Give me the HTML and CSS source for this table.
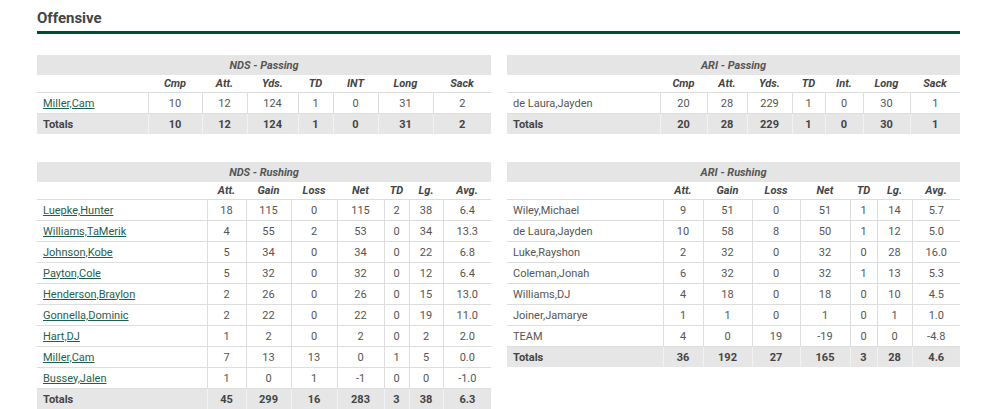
FILE: index.html
```html
<!DOCTYPE html>
<html>
<head>
<meta charset="utf-8">
<link rel="stylesheet" href="styles.css">
</head>
<body>
<div class="page">
  <h2 class="section-title">Offensive</h2>
  <div class="grid">
    <table class="stats pass-nds">
      <colgroup><col><col><col><col><col><col><col><col></colgroup>
      <thead>
        <tr class="caption-row"><th colspan="8">NDS - Passing</th></tr>
        <tr class="head-row"><th></th><th>Cmp</th><th>Att.</th><th>Yds.</th><th>TD</th><th>INT</th><th>Long</th><th>Sack</th></tr>
      </thead>
      <tbody>
        <tr><td><a href="#">Miller,Cam</a></td><td>10</td><td>12</td><td>124</td><td>1</td><td>0</td><td>31</td><td>2</td></tr>
        <tr class="totals"><td>Totals</td><td>10</td><td>12</td><td>124</td><td>1</td><td>0</td><td>31</td><td>2</td></tr>
      </tbody>
    </table>
    <table class="stats pass-ari">
      <colgroup><col><col><col><col><col><col><col><col></colgroup>
      <thead>
        <tr class="caption-row"><th colspan="8">ARI - Passing</th></tr>
        <tr class="head-row"><th></th><th>Cmp</th><th>Att.</th><th>Yds.</th><th>TD</th><th>Int.</th><th>Long</th><th>Sack</th></tr>
      </thead>
      <tbody>
        <tr><td>de Laura,Jayden</td><td>20</td><td>28</td><td>229</td><td>1</td><td>0</td><td>30</td><td>1</td></tr>
        <tr class="totals"><td>Totals</td><td>20</td><td>28</td><td>229</td><td>1</td><td>0</td><td>30</td><td>1</td></tr>
      </tbody>
    </table>
    <table class="stats rush-nds">
      <colgroup><col><col><col><col><col><col><col><col></colgroup>
      <thead>
        <tr class="caption-row"><th colspan="8">NDS - Rushing</th></tr>
        <tr class="head-row"><th></th><th>Att.</th><th>Gain</th><th>Loss</th><th>Net</th><th>TD</th><th>Lg.</th><th>Avg.</th></tr>
      </thead>
      <tbody>
        <tr><td><a href="#">Luepke,Hunter</a></td><td>18</td><td>115</td><td>0</td><td>115</td><td>2</td><td>38</td><td>6.4</td></tr>
        <tr><td><a href="#">Williams,TaMerik</a></td><td>4</td><td>55</td><td>2</td><td>53</td><td>0</td><td>34</td><td>13.3</td></tr>
        <tr><td><a href="#">Johnson,Kobe</a></td><td>5</td><td>34</td><td>0</td><td>34</td><td>0</td><td>22</td><td>6.8</td></tr>
        <tr><td><a href="#">Payton,Cole</a></td><td>5</td><td>32</td><td>0</td><td>32</td><td>0</td><td>12</td><td>6.4</td></tr>
        <tr><td><a href="#">Henderson,Braylon</a></td><td>2</td><td>26</td><td>0</td><td>26</td><td>0</td><td>15</td><td>13.0</td></tr>
        <tr><td><a href="#">Gonnella,Dominic</a></td><td>2</td><td>22</td><td>0</td><td>22</td><td>0</td><td>19</td><td>11.0</td></tr>
        <tr><td><a href="#">Hart,DJ</a></td><td>1</td><td>2</td><td>0</td><td>2</td><td>0</td><td>2</td><td>2.0</td></tr>
        <tr><td><a href="#">Miller,Cam</a></td><td>7</td><td>13</td><td>13</td><td>0</td><td>1</td><td>5</td><td>0.0</td></tr>
        <tr><td><a href="#">Bussey,Jalen</a></td><td>1</td><td>0</td><td>1</td><td>-1</td><td>0</td><td>0</td><td>-1.0</td></tr>
        <tr class="totals"><td>Totals</td><td>45</td><td>299</td><td>16</td><td>283</td><td>3</td><td>38</td><td>6.3</td></tr>
      </tbody>
    </table>
    <table class="stats rush-ari">
      <colgroup><col><col><col><col><col><col><col><col></colgroup>
      <thead>
        <tr class="caption-row"><th colspan="8">ARI - Rushing</th></tr>
        <tr class="head-row"><th></th><th>Att.</th><th>Gain</th><th>Loss</th><th>Net</th><th>TD</th><th>Lg.</th><th>Avg.</th></tr>
      </thead>
      <tbody>
        <tr><td>Wiley,Michael</td><td>9</td><td>51</td><td>0</td><td>51</td><td>1</td><td>14</td><td>5.7</td></tr>
        <tr><td>de Laura,Jayden</td><td>10</td><td>58</td><td>8</td><td>50</td><td>1</td><td>12</td><td>5.0</td></tr>
        <tr><td>Luke,Rayshon</td><td>2</td><td>32</td><td>0</td><td>32</td><td>0</td><td>28</td><td>16.0</td></tr>
        <tr><td>Coleman,Jonah</td><td>6</td><td>32</td><td>0</td><td>32</td><td>1</td><td>13</td><td>5.3</td></tr>
        <tr><td>Williams,DJ</td><td>4</td><td>18</td><td>0</td><td>18</td><td>0</td><td>10</td><td>4.5</td></tr>
        <tr><td>Joiner,Jamarye</td><td>1</td><td>1</td><td>0</td><td>1</td><td>0</td><td>1</td><td>1.0</td></tr>
        <tr><td>TEAM</td><td>4</td><td>0</td><td>19</td><td>-19</td><td>0</td><td>0</td><td>-4.8</td></tr>
        <tr class="totals"><td>Totals</td><td>36</td><td>192</td><td>27</td><td>165</td><td>3</td><td>28</td><td>4.6</td></tr>
      </tbody>
    </table>
  </div>
</div>
</body>
</html>
```

FILE: styles.css
```css
html, body {
  margin: 0;
  padding: 0;
  background: #fff;
}
body {
  font-family: Roboto, "Liberation Sans", Arial, sans-serif;
  color: #555;
}
.page {
  width: 923px;
  margin-left: 37px;
}
.section-title {
  margin: 0;
  padding-top: 8px;
  height: 20px;
  font-size: 15px;
  line-height: 20px;
  font-weight: 700;
  color: #444;
  border-bottom: 3px solid #004b33;
  padding-bottom: 3px;
}
.grid {
  display: grid;
  grid-template-columns: 454px 453px;
  column-gap: 16px;
  row-gap: 28px;
  align-items: start;
  margin-top: 21px;
}
.stats {
  width: 100%;
  border-collapse: collapse;
  table-layout: fixed;
  font-size: 11px;
}
.stats th, .stats td {
  padding: 0 4px;
  text-align: center;
  white-space: nowrap;
}
.caption-row th {
  background: #e5e5e5;
  height: 20px;
  font-weight: 700;
  font-style: italic;
  color: #555;
}
.head-row th {
  height: 17px;
  font-weight: 700;
  font-style: italic;
  color: #444;
  border-bottom: 1px solid #ddd;
}
.stats tbody td {
  height: 20px;
  border-bottom: 1px solid #ddd;
  border-left: 1px solid #ddd;
}
.stats tbody td:first-child {
  text-align: left;
  padding-left: 6px;
  border-left: none;
}
.stats tbody tr.totals td {
  background: #e6e6e6;
  font-weight: 700;
  color: #444;
  border-bottom: none;
  border-left-color: #f2f2f2;
}
.stats tbody tr.totals td:first-child {
  border-left: none;
}
.stats a {
  color: #1e5f4f;
  text-decoration: underline;
}

/* column widths */
.pass-nds col:nth-child(1) { width: 111px; }
.pass-nds col:nth-child(2) { width: 54px; }
.pass-nds col:nth-child(3) { width: 45px; }
.pass-nds col:nth-child(4) { width: 51px; }
.pass-nds col:nth-child(5) { width: 35px; }
.pass-nds col:nth-child(6) { width: 45px; }
.pass-nds col:nth-child(7) { width: 55px; }
.pass-nds col:nth-child(8) { width: 58px; }

.pass-ari col:nth-child(1) { width: 153px; }
.pass-ari col:nth-child(2) { width: 47px; }
.pass-ari col:nth-child(3) { width: 40px; }
.pass-ari col:nth-child(4) { width: 45px; }
.pass-ari col:nth-child(5) { width: 33px; }
.pass-ari col:nth-child(6) { width: 38px; }
.pass-ari col:nth-child(7) { width: 47px; }
.pass-ari col:nth-child(8) { width: 50px; }

.rush-nds col:nth-child(1) { width: 170px; }
.rush-nds col:nth-child(2) { width: 39px; }
.rush-nds col:nth-child(3) { width: 45px; }
.rush-nds col:nth-child(4) { width: 46px; }
.rush-nds col:nth-child(5) { width: 47px; }
.rush-nds col:nth-child(6) { width: 25px; }
.rush-nds col:nth-child(7) { width: 34px; }
.rush-nds col:nth-child(8) { width: 48px; }

.rush-ari col:nth-child(1) { width: 156px; }
.rush-ari col:nth-child(2) { width: 40px; }
.rush-ari col:nth-child(3) { width: 49px; }
.rush-ari col:nth-child(4) { width: 48px; }
.rush-ari col:nth-child(5) { width: 50px; }
.rush-ari col:nth-child(6) { width: 27px; }
.rush-ari col:nth-child(7) { width: 35px; }
.rush-ari col:nth-child(8) { width: 48px; }
```
